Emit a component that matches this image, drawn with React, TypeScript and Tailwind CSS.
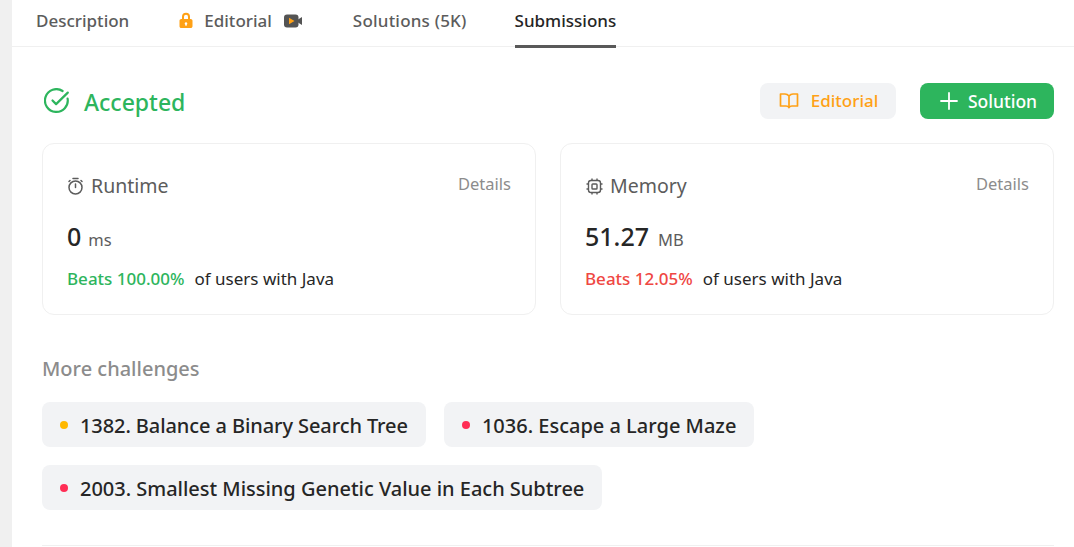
import React from "react";

function CheckCircle() {
  return (
    <svg width="26" height="26" viewBox="0 0 26 26" fill="none" stroke="#2db55d" strokeWidth="2.2" strokeLinecap="round" strokeLinejoin="round">
      <path d="M23.6 10.6A11.4 11.4 0 1 1 18.6 3" />
      <path d="M8.5 12.5l3.6 3.6L23.8 4.6" />
    </svg>
  );
}

function Card({ icon, title, value, unit, beats, color, unitGap }: { icon: React.ReactNode; title: string; value: string; unit: string; beats: string; color: string; unitGap: string }) {
  return (
    <div className="flex-1 h-[172px] rounded-xl border border-[#f0f0f0] pl-[24px] pr-[24px] pt-[28px]">
      <div className="flex justify-between items-start">
        <div className="flex items-center gap-[7px] text-[19.5px] leading-[28px] text-[#5c5c5c]">
          {icon}
          <span>{title}</span>
        </div>
        <span className="text-[16.5px] leading-[24px] text-[#8c8c8c]">Details</span>
      </div>
      <div className={`mt-[20px] flex items-baseline h-[32px] ${unitGap}`}>
        <span className="text-[25px] leading-[32px] font-medium text-[#262626]">{value}</span>
        <span className="text-[16.5px] text-[#5c5c5c]">{unit}</span>
      </div>
      <div className="mt-[15px] flex gap-[10px] text-[17px] leading-[24px] text-[#262626]">
        <span className={`font-medium ${color}`}>{beats}</span>
        <span>of users with Java</span>
      </div>
    </div>
  );
}

function Chip({ dot, text, textClass }: { dot: string; text: string; textClass: string }) {
  return (
    <div className="flex items-center h-[45px] rounded-lg bg-[#f2f3f5] pl-[18px] pr-[18px] gap-[12px]">
      <span className={`w-[8px] h-[8px] rounded-full ${dot}`} />
      <span className={`text-[20px] leading-[28px] font-medium text-[#262626] translate-y-[1px] ${textClass}`}>{text}</span>
    </div>
  );
}

export default function App() {
  return (
    <div className="w-[1074px] h-[547px] overflow-hidden bg-white flex font-['Noto_Sans','Open_Sans',sans-serif]">
      <div className="w-[12px] shrink-0 bg-[#f0f0f0]" />
      <div className="flex-1 flex flex-col min-w-0">
        <div className="h-[47px] shrink-0 border-b border-[#f0f0f0] flex pl-[24px] text-[17px] text-[#5c5c5c] font-medium">
          <div className="h-[47px] flex items-start pt-[9px] leading-[24px]">Description</div>
          <div className="ml-[49px] h-[47px] flex items-start pt-[9px] leading-[24px]">
            <svg className="mt-[3px] mr-[10px]" width="16" height="17" viewBox="0 0 16 17"><path fill="#ffa116" fillRule="evenodd" d="M4 7V4.700a4 4 0 0 1 8 0V7h.7c1 0 1.800.8 1.800 1.800v5.400c0 1-.8 1.800-1.800 1.800H3.300c-1 0-1.800-.8-1.800-1.800V8.800C1.500 7.800 2.300 7 3.300 7zM6 7h4V4.700a2 2 0 0 0-4 0zm2 3.300a1.300 1.300 0 0 0-.7 2.400v1h1.400v-1A1.300 1.300 0 0 0 8 10.300z" /></svg>
            <span>Editorial</span>
            <svg className="mt-[5px] ml-[12px]" width="18" height="14" viewBox="0 0 18 14"><rect x="0" y="0.500" width="14.500" height="13" rx="3" fill="#545454"/><path d="M14 5.500l4-2.500v8l-4-2.500z" fill="#545454"/><path d="M5 3.800l5.500 3.200L5 10.200z" fill="#ffa116"/></svg>
          </div>
          <div className="ml-[51px] h-[47px] flex items-start pt-[9px] leading-[24px] tracking-[0.2px]">Solutions (5K)</div>
          <div className="ml-[48px] h-[48px] flex items-start pt-[9px] leading-[24px] text-[#262626] border-b-[3px] border-[#595959]">Submissions</div>
        </div>
        <div className="flex-1 pl-[30px] pr-[20px] pt-[36px]">
          <div className="flex items-center justify-between h-[36px]">
            <div className="flex items-center gap-[14px] pl-[2px] text-[23px] font-medium text-[#2db55d]">
              <CheckCircle />
              <span className="leading-[32px] translate-y-[1px]">Accepted</span>
            </div>
            <div className="flex gap-[24px]">
              <div className="w-[136px] h-[36px] rounded-lg bg-[#f2f3f5] flex items-center justify-center gap-[12px] pl-[1px] text-[17px] font-medium text-[#ffa116]">
                <svg width="20" height="18" viewBox="0 0 20 18" fill="none" stroke="#ffa116" strokeWidth="1.700" strokeLinejoin="round"><path d="M10 4C9 2.800 7.500 2 6 2H1.500v12H7c1.500 0 2.500.5 3 1.500.5-1 1.500-1.500 3-1.500h5.500V2H14c-1.500 0-3 .8-4 2zM10 4v11.500" /></svg>
                <span>Editorial</span>
              </div>
              <div className="w-[134px] h-[36px] rounded-lg bg-[#2db55d] flex items-center justify-center gap-[10px] pl-[3px] text-[17.5px] font-medium text-white">
                <svg width="18" height="18" viewBox="0 0 18 18" stroke="white" strokeWidth="1.800" strokeLinecap="round"><path d="M9 1v16M1 9h16" /></svg>
                <span>Solution</span>
              </div>
            </div>
          </div>
          <div className="mt-[24px] flex gap-[24px]">
            <Card
              title="Runtime"
              value="0"
              unit="ms"
              beats="Beats 100.00%"
              color="text-[#2db55d]"
              unitGap="gap-[7px]"
              icon={
                <svg width="17" height="18" viewBox="0 0 17 18" fill="none" stroke="#5c5c5c" strokeWidth="1.500" strokeLinecap="round"><circle cx="8.500" cy="10.500" r="6.500" /><path d="M6 1.500h5M8.500 7v3.500M14 3.500l1 1M3 3.500l-1 1" /></svg>
              }
            />
            <Card
              title="Memory"
              value="51.27"
              unit="MB"
              beats="Beats 12.05%"
              color="text-[#ef4743]"
              unitGap="gap-[9px]"
              icon={
                <svg width="18" height="17" viewBox="-1 0 18 17" fill="none" stroke="#5c5c5c" strokeWidth="1.400"><rect x="2.500" y="2.500" width="12" height="12" rx="2.500" /><rect x="6" y="6" width="5" height="5" rx="0.800" /><path d="M6 .5v2M11 .5v2M6 14.500v2M11 14.500v2M.5 6h2M.5 11h2M14.500 6h2M14.500 11h2" /></svg>
              }
            />
          </div>
          <div className="mt-[40px] text-[20px] leading-[28px] font-medium text-[#8c8c8c]">More challenges</div>
          <div className="mt-[19px] flex flex-wrap gap-x-[18px] gap-y-[18px]">
            <Chip dot="bg-[#ffb800]" text="1382. Balance a Binary Search Tree" textClass="tracking-[-0.09px]" />
            <Chip dot="bg-[#ff2d55]" text="1036. Escape a Large Maze" textClass="" />
            <Chip dot="bg-[#ff2d55]" text="2003. Smallest Missing Genetic Value in Each Subtree" textClass="tracking-[-0.02px]" />
          </div>
          <div className="mt-[35px] border-t border-[#f0f0f0]" />
        </div>
      </div>
    </div>
  );
}
